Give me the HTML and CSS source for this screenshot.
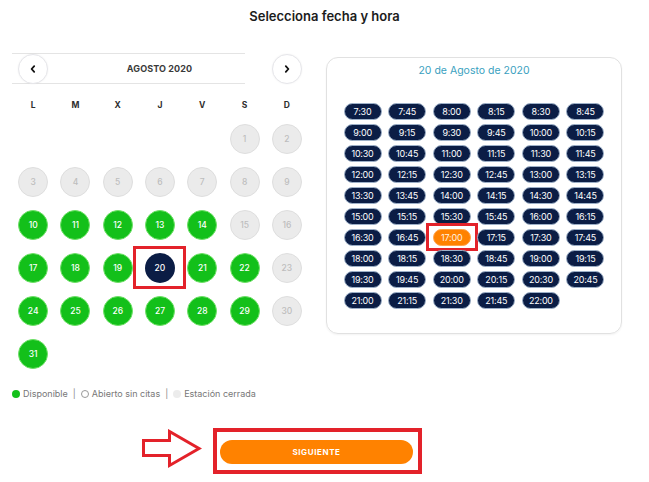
FILE: index.html
```html
<!DOCTYPE html>
<html lang="es">
<head>
<meta charset="utf-8">
<title>Selecciona fecha y hora</title>
<link rel="stylesheet" href="styles.css">
</head>
<body>
<div class="page">
  <h1 class="title">Selecciona fecha y hora</h1>
  <div class="main">
    <section class="calendar">
      <div class="cal-head">
        <div class="bar">
          <button class="nav" aria-label="Mes anterior"><svg viewBox="0 0 10 10" width="10" height="10"><path d="M6.2 2.2 L3.6 5 L6.2 7.8" fill="none" stroke="#111" stroke-width="1.8" stroke-linecap="round" stroke-linejoin="round"/></svg></button>
          <span class="month">AGOSTO 2020</span>
        </div>
        <button class="nav next" aria-label="Mes siguiente"><svg viewBox="0 0 10 10" width="10" height="10"><path d="M3.8 2.2 L6.4 5 L3.8 7.8" fill="none" stroke="#111" stroke-width="1.8" stroke-linecap="round" stroke-linejoin="round"/></svg></button>
      </div>
      <div class="weekdays"><span>L</span><span>M</span><span>X</span><span>J</span><span>V</span><span>S</span><span>D</span></div>
      <div class="days">
        <span class="cell"></span><span class="cell"></span><span class="cell"></span><span class="cell"></span><span class="cell"></span>
        <span class="cell"><span class="day closed">1</span></span>
        <span class="cell"><span class="day closed">2</span></span>
        <span class="cell"><span class="day closed">3</span></span>
        <span class="cell"><span class="day closed">4</span></span>
        <span class="cell"><span class="day closed">5</span></span>
        <span class="cell"><span class="day closed">6</span></span>
        <span class="cell"><span class="day closed">7</span></span>
        <span class="cell"><span class="day closed">8</span></span>
        <span class="cell"><span class="day closed">9</span></span>
        <span class="cell"><span class="day open">10</span></span>
        <span class="cell"><span class="day open">11</span></span>
        <span class="cell"><span class="day open">12</span></span>
        <span class="cell"><span class="day open">13</span></span>
        <span class="cell"><span class="day open">14</span></span>
        <span class="cell"><span class="day closed">15</span></span>
        <span class="cell"><span class="day closed">16</span></span>
        <span class="cell"><span class="day open">17</span></span>
        <span class="cell"><span class="day open">18</span></span>
        <span class="cell"><span class="day open">19</span></span>
        <span class="cell mark-day"><span class="day selected">20</span></span>
        <span class="cell"><span class="day open">21</span></span>
        <span class="cell"><span class="day open">22</span></span>
        <span class="cell"><span class="day closed">23</span></span>
        <span class="cell"><span class="day open">24</span></span>
        <span class="cell"><span class="day open">25</span></span>
        <span class="cell"><span class="day open">26</span></span>
        <span class="cell"><span class="day open">27</span></span>
        <span class="cell"><span class="day open">28</span></span>
        <span class="cell"><span class="day open">29</span></span>
        <span class="cell"><span class="day closed">30</span></span>
        <span class="cell"><span class="day open">31</span></span>
      </div>
    </section>
    <section class="times">
      <h2 class="times-title">20 de Agosto de 2020</h2>
      <div class="slots">
        <span class="slot">7:30</span><span class="slot">7:45</span><span class="slot">8:00</span><span class="slot">8:15</span><span class="slot">8:30</span><span class="slot">8:45</span>
        <span class="slot">9:00</span><span class="slot">9:15</span><span class="slot">9:30</span><span class="slot">9:45</span><span class="slot">10:00</span><span class="slot">10:15</span>
        <span class="slot">10:30</span><span class="slot">10:45</span><span class="slot">11:00</span><span class="slot">11:15</span><span class="slot">11:30</span><span class="slot">11:45</span>
        <span class="slot">12:00</span><span class="slot">12:15</span><span class="slot">12:30</span><span class="slot">12:45</span><span class="slot">13:00</span><span class="slot">13:15</span>
        <span class="slot">13:30</span><span class="slot">13:45</span><span class="slot">14:00</span><span class="slot">14:15</span><span class="slot">14:30</span><span class="slot">14:45</span>
        <span class="slot">15:00</span><span class="slot">15:15</span><span class="slot">15:30</span><span class="slot">15:45</span><span class="slot">16:00</span><span class="slot">16:15</span>
        <span class="slot">16:30</span><span class="slot">16:45</span><span class="slot active">17:00</span><span class="slot">17:15</span><span class="slot">17:30</span><span class="slot">17:45</span>
        <span class="slot">18:00</span><span class="slot">18:15</span><span class="slot">18:30</span><span class="slot">18:45</span><span class="slot">19:00</span><span class="slot">19:15</span>
        <span class="slot">19:30</span><span class="slot">19:45</span><span class="slot">20:00</span><span class="slot">20:15</span><span class="slot">20:30</span><span class="slot">20:45</span>
        <span class="slot">21:00</span><span class="slot">21:15</span><span class="slot">21:30</span><span class="slot">21:45</span><span class="slot">22:00</span>
      </div>
    </section>
  </div>
  <div class="legend">
    <span class="dot dot-green"></span><span>Disponible</span>
    <span class="sep">|</span>
    <span class="dot dot-ring"></span><span>Abierto sin citas</span>
    <span class="sep">|</span>
    <span class="dot dot-grey"></span><span>Estación cerrada</span>
  </div>
  <div class="actions">
    <svg class="arrow" viewBox="0 0 62 40" width="62" height="40"><polygon points="2.5,11.5 28.5,11.5 28.5,2.5 58,19.5 28.5,36.5 28.5,26.5 2.5,26.5" fill="#fff" stroke="#e3222a" stroke-width="3" stroke-linejoin="miter"/></svg>
    <div class="highlight">
      <button class="next-btn">SIGUIENTE</button>
    </div>
  </div>
</div>
</body>
</html>
```
FILE: styles.css
```css
* { box-sizing: border-box; }
html, body { margin: 0; padding: 0; background: #fff; }
body {
  font-family: "Inter", "Open Sans", sans-serif;
  color: #222;
  width: 649px;
  height: 482px;
  overflow: hidden;
}
.page { width: 649px; }

.title {
  margin: 0;
  padding-top: 7px;
  font-size: 13px;
  line-height: 18px;
  font-weight: 600;
  text-align: center;
  color: #1c1c1c;
  letter-spacing: 0;
}

.main {
  display: flex;
  align-items: flex-start;
  gap: 18px;
  padding-left: 12px;
  margin-top: 28px;
}

/* Calendar */
.calendar { width: 296px; }
.cal-head {
  display: flex;
  align-items: center;
  height: 31px;
}
.bar {
  width: 233px;
  height: 31px;
  border-top: 1px solid #e4e4e4;
  border-bottom: 1px solid #e4e4e4;
  display: flex;
  align-items: center;
}
.nav {
  width: 30px;
  height: 30px;
  border-radius: 50%;
  border: 1px solid #e6e6ea;
  background: #fff;
  padding: 0;
  display: flex;
  align-items: center;
  justify-content: center;
  box-shadow: 0 0 2px rgba(0,0,0,0.06);
  flex: none;
}
.bar .nav { margin-left: 6px; }
.nav.next { margin-left: 27px; }
.month {
  flex: 1;
  text-align: center;
  padding-left: 26px;
  font-size: 9px;
  font-weight: 700;
  color: #3a3a3a;
  letter-spacing: 0.1px;
}

.weekdays {
  display: grid;
  grid-template-columns: repeat(7, 1fr);
  margin-top: 10px;
  height: 22px;
  align-items: center;
  text-align: center;
  font-size: 8.5px;
  font-weight: 700;
  color: #2e2e2e;
}

.days {
  display: grid;
  grid-template-columns: repeat(7, 1fr);
  row-gap: 13px;
  margin-top: 8px;
}
.cell {
  height: 30px;
  display: flex;
  justify-content: center;
  position: relative;
}
.day {
  width: 30px;
  height: 30px;
  border-radius: 50%;
  display: flex;
  align-items: center;
  justify-content: center;
  font-size: 8.5px;
  font-weight: 500;
}
.day.closed {
  background: #ebebeb;
  border: 1px solid #dedede;
  color: #bdbdbd;
}
.day.open {
  background: #13c01a;
  border: 1px solid #6fe067;
  color: #fff;
}
.day.selected {
  background: #0b1d45;
  color: #fff;
}
.mark-day::after {
  content: "";
  position: absolute;
  left: -6px;
  right: -5px;
  top: -7px;
  bottom: -6px;
  border: 3px solid #e3222a;
}

/* Times */
.times {
  width: 296px;
  margin-top: 4px;
  border: 1px solid #e1e1e1;
  border-radius: 12px;
  padding: 6px 0 24px;
  box-shadow: 0 1px 2px rgba(0,0,0,0.05);
}
.times-title {
  margin: 0;
  text-align: center;
  font-size: 10.5px;
  line-height: 14px;
  font-weight: 400;
  color: #3a9fc0;
}
.slots {
  margin-top: 25px;
  display: grid;
  grid-template-columns: repeat(6, 38px);
  column-gap: 6.6px;
  row-gap: 4px;
  justify-content: center;
}
.slot {
  height: 17px;
  border-radius: 9px;
  background: #0b1d45;
  border: 1px solid #9db0c8;
  color: #fff;
  font-size: 9px;
  line-height: 15px;
  text-align: center;
  letter-spacing: -0.2px;
  position: relative;
}
.slot.active {
  background: #ff8200;
  border-color: #ffa24a;
  color: #fff3e0;
}
.slot.active::after {
  content: "";
  position: absolute;
  left: -8px;
  right: -8px;
  top: -7px;
  bottom: -6px;
  border: 3px solid #e3222a;
}

/* Legend */
.legend {
  margin-top: 18px;
  padding-left: 12px;
  display: flex;
  align-items: center;
  gap: 3px;
  font-size: 9px;
  line-height: 14px;
  color: #777;
}
.sep { margin: 0 2px; color: #888; }
.dot {
  width: 8px;
  height: 8px;
  border-radius: 50%;
  display: inline-block;
}
.dot-green { background: #14c11b; }
.dot-ring { border: 1px solid #999; background: #fff; }
.dot-grey { background: #ececec; }

/* Actions */
.actions {
  display: flex;
  align-items: center;
  padding-left: 141px;
  margin-top: 27px;
  gap: 10px;
}
.arrow { display: block; flex: none; margin-top: -4px; }
.highlight {
  width: 209px;
  height: 46px;
  border: 4px solid #e3222a;
  padding: 8px 5px 4px 3px;
}
.next-btn {
  display: block;
  width: 100%;
  height: 24px;
  border: none;
  border-radius: 12px;
  background: #ff8200;
  color: #fff;
  font-family: "Inter", "Open Sans", sans-serif;
  font-size: 8px;
  font-weight: 700;
  letter-spacing: 0.6px;
  padding: 0;
}
```
